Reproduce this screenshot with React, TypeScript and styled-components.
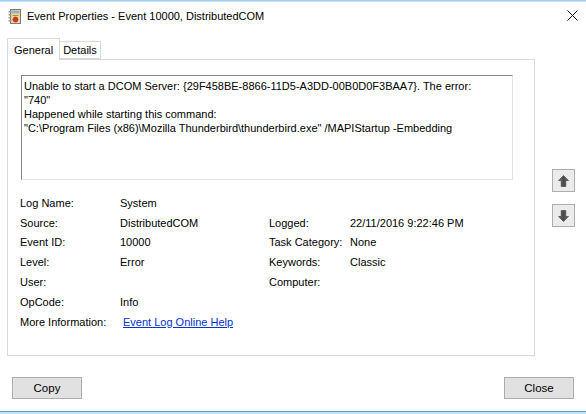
import React from 'react';
import styled, { createGlobalStyle } from 'styled-components';

const GlobalStyle = createGlobalStyle`
	html, body {
		margin: 0;
		padding: 0;
		background: #ffffff;
	}
	body {
		font-family: 'Liberation Sans', Arial, sans-serif;
		font-size: 11px;
		color: #000000;
	}
`;

const fields: [string, React.ReactNode, string?, string?][] = [
	['Log Name:', 'System'],
	['Source:', 'DistributedCOM', 'Logged:', '22/11/2016 9:22:46 PM'],
	['Event ID:', '10000', 'Task Category:', 'None'],
	['Level:', 'Error', 'Keywords:', 'Classic'],
	['User:', '', 'Computer:', ''],
	['OpCode:', 'Info'],
];

const EventIcon = () => (
	<svg width="13" height="15" viewBox="0 0 13 15">
		<rect x="2.5" y="0.5" width="10" height="14" fill="#f3d98a" stroke="#7a7a7a" />
		<rect x="3.5" y="1.5" width="8" height="3" fill="#8fb3d9" />
		<line x1="4.5" y1="6.5" x2="10.5" y2="6.5" stroke="#b08a3c" />
		<circle cx="7.5" cy="10.5" r="2.5" fill="#d8353a" stroke="#8e1e22" strokeWidth="0.6" />
		{[2, 5, 8, 11].map((y) => (
			<rect key={y} x="0.5" y={y} width="3" height="1.5" fill="#9a9a9a" />
		))}
	</svg>
);

const ArrowIcon = ({ down }: { down?: boolean }) => (
	<svg
		width="11"
		height="12"
		viewBox="0 0 11 12"
		style={down ? { transform: 'rotate(180deg)' } : undefined}
	>
		<defs>
			<linearGradient id={down ? 'ad' : 'au'} x1="0" y1="0" x2="1" y2="0">
				<stop offset="0" stopColor="#7a7a7a" />
				<stop offset="0.5" stopColor="#4a4a4a" />
				<stop offset="1" stopColor="#6a6a6a" />
			</linearGradient>
		</defs>
		<path
			d="M5.5 0.5 L10.5 5.5 L7.8 5.5 L7.8 11.5 L3.2 11.5 L3.2 5.5 L0.5 5.5 Z"
			fill={`url(#${down ? 'ad' : 'au'})`}
			stroke="#3a3a3a"
			strokeWidth="0.6"
		/>
	</svg>
);

const App = () => {
	return (
		<>
			<GlobalStyle />
			<Window>
				<TopEdge />
				<TitleBar>
					<EventIcon />
					<Title>Event Properties - Event 10000, DistributedCOM</Title>
					<CloseX>
						<svg width="11" height="11" viewBox="0 0 11 11">
							<path d="M0.5 0.5 L10.5 10.5 M10.5 0.5 L0.5 10.5" stroke="#111" strokeWidth="1" />
						</svg>
					</CloseX>
				</TitleBar>
				<Main>
					<TabControl>
						<TabStrip>
							<Tab active>General</Tab>
							<Tab>Details</Tab>
						</TabStrip>
						<Panel>
							<Description>
								Unable to start a DCOM Server: {'{'}29F458BE-8866-11D5-A3DD-00B0D0F3BAA7{'}'}. The error:
								<br />
								"740"
								<br />
								Happened while starting this command:
								<br />
								"C:\Program Files (x86)\Mozilla Thunderbird\thunderbird.exe" /MAPIStartup -Embedding
							</Description>
							<Fields>
								{fields.map(([l1, v1, l2, v2]) => (
									<React.Fragment key={l1}>
										<Label>{l1}</Label>
										<Value>{v1}</Value>
										<Label>{l2 ?? ''}</Label>
										<Value>{v2 ?? ''}</Value>
									</React.Fragment>
								))}
								<Label>More Information:</Label>
								<Value wide>
									<Link href="#">Event Log Online Help</Link>
								</Value>
							</Fields>
						</Panel>
					</TabControl>
					<SideButtons>
						<ArrowButton>
							<ArrowIcon />
						</ArrowButton>
						<ArrowButton>
							<ArrowIcon down />
						</ArrowButton>
					</SideButtons>
				</Main>
				<Footer>
					<Button>Copy</Button>
					<Button>Close</Button>
				</Footer>
				<BottomEdge />
			</Window>
		</>
	);
};

const Window = styled.div`
	width: 586px;
	height: 414px;
	display: flex;
	flex-direction: column;
	overflow: hidden;
	background: #ffffff;
`;

const TopEdge = styled.div`
	height: 2px;
	background: linear-gradient(#8fc6ec, #d4ecfa);
`;

const TitleBar = styled.div`
	height: 28px;
	display: flex;
	align-items: center;
	padding: 0 8px 0 8px;
`;

const Title = styled.div`
	margin-left: 6px;
	font-size: 11px;
	flex: 1;
	padding-bottom: 1px;
`;

const CloseX = styled.div`
	width: 11px;
	height: 11px;
	display: flex;
	margin-bottom: 1px;
`;

const Main = styled.div`
	display: flex;
	padding: 7px 0 0 7px;
`;

const TabControl = styled.div`
	width: 528px;
	display: flex;
	flex-direction: column;
`;

const TabStrip = styled.div`
	height: 22px;
	display: flex;
	align-items: flex-end;
`;

const Tab = styled.div<{ active?: boolean }>`
	height: ${(p) => (p.active ? '22px' : '18px')};
	padding: 0 ${(p) => (p.active ? '6px' : '3px')} 0 ${(p) => (p.active ? '6px' : '3px')};
	margin-bottom: ${(p) => (p.active ? '-1px' : '0')};
	border: 1px solid #d9d9d9;
	border-bottom: ${(p) => (p.active ? 'none' : '1px solid #d9d9d9')};
	border-left: ${(p) => (p.active ? '1px solid #d9d9d9' : 'none')};
	background: #ffffff;
	display: flex;
	align-items: center;
	box-sizing: border-box;
	position: relative;
	z-index: ${(p) => (p.active ? 1 : 0)};
	font-size: 11px;
`;

const Panel = styled.div`
	height: 297px;
	box-sizing: border-box;
	border: 1px solid #d9d9d9;
	padding: 15px 21px 0 13px;
`;

const Description = styled.div`
	height: 105px;
	box-sizing: border-box;
	border-top: 1px solid #828790;
	border-left: 1px solid #828790;
	border-right: 1px solid #e3e3e3;
	border-bottom: 1px solid #e3e3e3;
	padding: 3px 2px 0 2px;
	line-height: 14px;
	white-space: nowrap;
	overflow: hidden;
`;

const Fields = styled.div`
	display: grid;
	grid-template-columns: 100px 149px 81px 1fr;
	grid-auto-rows: 19.8px;
	margin: 13px 0 0 -1px;
	align-items: center;
`;

const Label = styled.div`
	white-space: nowrap;
`;

const Value = styled.div<{ wide?: boolean }>`
	white-space: nowrap;
	grid-column: ${(p) => (p.wide ? 'span 3' : 'auto')};
	padding-left: ${(p) => (p.wide ? '3px' : '0')};
`;

const Link = styled.a`
	color: #0033cc;
	text-decoration: underline;
`;

const SideButtons = styled.div`
	display: flex;
	flex-direction: column;
	gap: 12px;
	margin-left: 17px;
	padding-top: 132px;
`;

const ArrowButton = styled.div`
	width: 23px;
	height: 23px;
	box-sizing: border-box;
	border: 1px solid #adadad;
	background: #ebebeb;
	display: flex;
	align-items: center;
	justify-content: center;
`;

const Footer = styled.div`
	display: flex;
	justify-content: space-between;
	padding: 0 12px;
	margin-top: 21px;
`;

const Button = styled.div`
	width: 70px;
	height: 22px;
	box-sizing: border-box;
	border: 1px solid #adadad;
	background: #e1e1e1;
	display: flex;
	align-items: center;
	justify-content: center;
	font-size: 11.5px;
`;

const BottomEdge = styled.div`
	margin-top: auto;
	height: 3px;
	background: linear-gradient(#5c9fd6 0, #5c9fd6 1px, #bfe4f7 1px);
`;

export default App;
